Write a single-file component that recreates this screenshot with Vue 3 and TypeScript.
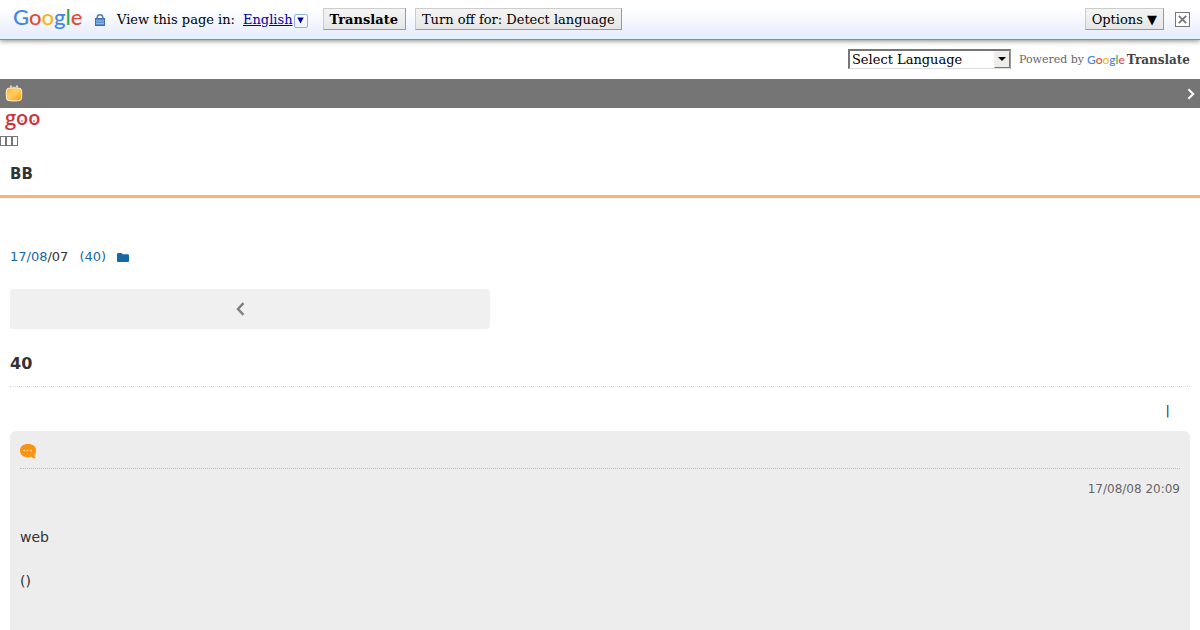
<script setup lang="ts">
import { ref } from 'vue'

interface Letter {
  char: string
  tone: string
}

const googleLetters: Letter[] = [
  { char: 'G', tone: 'blue' },
  { char: 'o', tone: 'red' },
  { char: 'o', tone: 'yellow' },
  { char: 'g', tone: 'blue' },
  { char: 'l', tone: 'green' },
  { char: 'e', tone: 'red' },
]

const language = ref('')
</script>

<template>
  <div class="page">
    <header class="translate-bar">
      <span class="google google-large" aria-label="Google"><span v-for="(l, i) in googleLetters" :key="i" :class="l.tone">{{ l.char }}</span></span>
      <svg class="lock" width="10" height="12" viewBox="0 0 10 12" aria-hidden="true">
        <path d="M2.2 6V3.500a2.800 2.700 0 0 1 5.600 0V6" fill="none" stroke="#4f7fb5" stroke-width="1.500" />
        <rect x="0.5" y="4.500" width="9" height="7" fill="#5a8fcb" stroke="#3f6fa6" />
        <path d="M1 7h8M1 9.400h8" stroke="#a5c6ea" stroke-width="0.800" />
      </svg>
      <span class="view-label">View this page in:</span>
      <a class="lang-link" href="#"><span class="lang-name">English</span><span class="lang-arrow"><svg width="7" height="7" viewBox="0 0 7 7" aria-hidden="true"><path d="M0.300 0.500h6.400L3.500 6.500z" fill="#0000a0" /></svg></span></a>
      <button class="bar-button strong" type="button">Translate</button>
      <button class="bar-button" type="button">Turn off for: Detect language</button>
      <button class="bar-button options" type="button">Options ▼</button>
      <button class="close" type="button" aria-label="Close">
        <svg width="9" height="9" viewBox="0 0 9 9" aria-hidden="true"><path d="M0.800 0.800l7.400 7.400M8.200 0.800L0.800 8.200" stroke="#777" stroke-width="1.800" /></svg>
      </button>
    </header>

    <div class="widget">
      <div class="select-box">
        <select v-model="language" aria-label="Select Language">
          <option value="">Select Language</option>
          <option value="en">English</option>
        </select>
        <span class="select-arrow"><svg width="8" height="4" viewBox="0 0 8 4" aria-hidden="true"><path d="M0 0h8L4 4z" fill="#000" /></svg></span>
      </div>
      <span class="powered">Powered by</span>
      <a class="powered-link" href="#"><span class="google google-small" aria-label="Google"><span v-for="(l, i) in googleLetters" :key="i" :class="l.tone">{{ l.char }}</span></span><span class="powered-name">Translate</span></a>
    </div>

    <nav class="dark-bar">
      <a href="#" class="icon-link" aria-label="Home">
        <svg width="18" height="18" viewBox="0 0 18 18" aria-hidden="true">
          <defs>
            <linearGradient id="tv" x1="0" y1="0" x2="1" y2="1">
              <stop offset="0" stop-color="#ffb81a" />
              <stop offset="0.45" stop-color="#ffce60" />
              <stop offset="1" stop-color="#f99a08" />
            </linearGradient>
          </defs>
          <path d="M8 3.500L6 1.500M10 3.500l2-2" stroke="#bbb" stroke-width="1" />
          <circle cx="6" cy="1.500" r="1.200" fill="#ccc" />
          <circle cx="9" cy="2.200" r="1" fill="#aaa" />
          <circle cx="12" cy="1.500" r="1.200" fill="#ccc" />
          <path d="M4 3.200Q9 2.600 14 3.200q2.500 0 2.600 2.500.3 3.500 0 7 0 2.800-2.600 3-5 .5-10 0-2.500-.2-2.600-3-.3-3.500 0-7Q1.500 3.200 4 3.200z" fill="url(#tv)" stroke="#fff2d2" stroke-width="1" />
        </svg>
      </a>
      <a href="#" class="icon-link" aria-label="Next">
        <svg width="8" height="12" viewBox="0 0 8 12" aria-hidden="true"><path d="M1.400 1.200L6.200 6l-4.800 4.800" fill="none" stroke="#fff" stroke-width="2" /></svg>
      </a>
    </nav>

    <a class="goo" href="#"><span>g</span><span class="eye">o</span><span class="eye">o</span></a>
    <div class="boxes" aria-hidden="true"><i v-for="n in 3" :key="n"></i></div>

    <h1>BB</h1>

    <main>
      <div class="meta">
        <span><a href="#">17/08</a>/07</span>
        <a href="#">(40)</a>
        <a href="#" class="icon-link" aria-label="Folder">
          <svg width="12" height="9" viewBox="0 0 12 9" aria-hidden="true"><path d="M1 0h3.500l1.300 1.300H11q1 0 1 1V8q0 1-1 1H1Q0 9 0 8V1q0-1 1-1z" fill="#1769a5" /></svg>
        </a>
      </div>

      <a class="prev" href="#" aria-label="Previous">
        <svg width="9" height="14" viewBox="0 0 9 14" aria-hidden="true"><path d="M7.500 1.200L2 7l5.500 5.800" fill="none" stroke="#808080" stroke-width="2.400" /></svg>
      </a>

      <h2>40</h2>
      <div class="divider">|</div>

      <article class="comment">
        <div class="comment-head">
          <svg width="16" height="16" viewBox="0 0 16 16" aria-hidden="true">
            <path d="M8 1c5 0 8 2.400 8 6.300 0 2-.5 3.500-1.500 4.700.1 1.500.5 2.500 1.500 3.300-2 0-3.600-.4-4.800-1.500Q9.700 14.200 8 14.200c-5 0-8-2.700-8-6.700S3 1 8 1z" fill="#fb9312" />
            <circle cx="4" cy="7.500" r="0.800" fill="#fff0d8" />
            <circle cx="7.500" cy="7.500" r="0.800" fill="#fff0d8" />
            <circle cx="11" cy="7.500" r="0.800" fill="#fff0d8" />
          </svg>
        </div>
        <time>17/08/08 20:09</time>
        <p>web</p>
        <p>()</p>
      </article>
    </main>
  </div>
</template>

<style>
body {
  margin: 0;
  background: #fff;
}
html {
  overflow: hidden;
}
</style>

<style scoped>
.page {
  color: #333;
  font-family: "DejaVu Sans", sans-serif;
  font-size: 13px;
  height: 100vh;
  overflow: hidden;
}
a {
  color: #1769a5;
  text-decoration: none;
}
.icon-link {
  display: flex;
}
.translate-bar {
  box-sizing: border-box;
  display: flex;
  align-items: center;
  height: 40px;
  padding: 0 10px 0 13px;
  border-bottom: 1px solid #6b90da;
  background: linear-gradient(#fff 20%, #e9effc 85%, #e0f0fa);
  box-shadow: 0 1px 5px #888;
  color: #000;
  font-family: "DejaVu Serif", serif;
}
.google {
  font-family: Lato, sans-serif;
  font-weight: 500;
}
.google-large {
  width: 68px;
  margin-right: 14px;
  font-size: 22px;
  line-height: 30px;
  padding-bottom: 6px;
}
.blue { color: #4285e4; }
.red { color: #df4a3c; }
.yellow { color: #f2b90c; }
.green { color: #34a853; }
.lock {
  margin-right: 12px;
}
.view-label {
  margin-right: 8px;
}
.lang-link {
  display: flex;
  align-items: center;
  margin-right: 15px;
  color: #0000a0;
}
.lang-name {
  text-decoration: underline;
}
.lang-arrow {
  box-sizing: border-box;
  display: flex;
  align-items: center;
  justify-content: center;
  width: 14px;
  height: 14px;
  margin: 2px 0 0 1px;
  border: 1px solid #8fb0e0;
  border-radius: 2px;
}
.bar-button {
  box-sizing: border-box;
  height: 22px;
  margin: 0 9px 1px 0;
  padding: 0 6px;
  border: 1px solid;
  border-color: #ccc #999 #999 #ccc;
  background: linear-gradient(#f4f4f4, #e6e6e6);
  color: #000;
  font: 13px "DejaVu Serif", serif;
  white-space: nowrap;
}
.strong {
  padding: 0 7px 0 6px;
  font-weight: bold;
}
.options {
  margin: 0 11px 1px auto;
}
.close {
  box-sizing: border-box;
  display: flex;
  align-items: center;
  justify-content: center;
  width: 15px;
  height: 15px;
  padding: 0;
  border: 1px solid #777;
  background: #fff;
}
.widget {
  display: flex;
  align-items: center;
  justify-content: flex-end;
  height: 39px;
  padding-right: 10px;
  font-family: "DejaVu Serif", serif;
}
.select-box {
  position: relative;
  width: 163px;
  margin: 0 8px 2px 0;
}
select {
  appearance: none;
  box-sizing: border-box;
  display: block;
  width: 100%;
  height: 20px;
  padding: 0 18px 0 2px;
  border: solid;
  border-color: #767676 #999 #ddd #767676;
  border-width: 2px 1px 1px 2px;
  border-radius: 0;
  background: #fff;
  color: #000;
  font: 13px "DejaVu Serif", serif;
}
.select-arrow {
  position: absolute;
  top: 2px;
  right: 1px;
  bottom: 1px;
  box-sizing: border-box;
  display: flex;
  align-items: center;
  justify-content: center;
  width: 16px;
  border: 1px solid;
  border-color: #eee #777 #777 #eee;
  background: #eeede9;
  pointer-events: none;
}
.powered {
  margin-right: 3px;
  color: #666;
  font-size: 11px;
}
.powered-link {
  display: flex;
  align-items: center;
}
.google-small {
  margin-right: 2px;
  font-size: 12px;
}
.powered-name {
  color: #444;
  font-size: 12px;
  font-weight: bold;
}
.dark-bar {
  display: flex;
  align-items: center;
  justify-content: space-between;
  height: 29px;
  padding: 0 5px;
  background: #757575;
}
.goo {
  display: flex;
  height: 27px;
  padding-left: 5px;
  color: #c9363b;
  font: 600 20px/20px "Open Sans", sans-serif;
}
.eye {
  position: relative;
}
.eye::after {
  content: "";
  position: absolute;
  left: 5px;
  top: 12px;
  width: 2px;
  height: 2px;
  background: #e59a9d;
}
.boxes {
  display: flex;
  height: 12px;
  padding-top: 1px;
}
.boxes i {
  box-sizing: border-box;
  width: 6px;
  height: 10px;
  border: 1px solid #777;
}
h1 {
  margin: 0;
  padding: 14px 10px 9px;
  border-bottom: 3px solid #ffb366;
  font-size: 15px;
  line-height: 24px;
}
h1 + main {
  padding: 47px 10px 0;
}
.meta {
  display: flex;
  align-items: center;
  gap: 11px;
  line-height: 24px;
}
.prev {
  box-sizing: border-box;
  display: flex;
  align-items: center;
  justify-content: center;
  width: calc(50% - 110px);
  min-width: 120px;
  height: 40px;
  margin-top: 20px;
  padding-right: 20px;
  border-radius: 4px;
  background: #f0f0f0;
}
h2 {
  margin: 23px 0 0;
  padding-bottom: 10px;
  border-bottom: 1px dotted #ddd;
  font-size: 16px;
  line-height: 24px;
}
.divider {
  padding: 12px 20px 8px;
  line-height: 24px;
  text-align: right;
}
.comment {
  padding: 10px;
  border-radius: 6px 6px 0 0;
  background: #ededed;
  min-height: 200px;
}
.comment-head {
  display: flex;
  padding: 2px 0 9px;
  border-bottom: 1px dotted #bbb;
}
time {
  display: block;
  margin-bottom: 27px;
  padding-top: 10px;
  color: #666;
  font-size: 12px;
  line-height: 20px;
  text-align: right;
}
p {
  margin: 0 0 22px;
  font-size: 14px;
  line-height: 22px;
}
</style>
